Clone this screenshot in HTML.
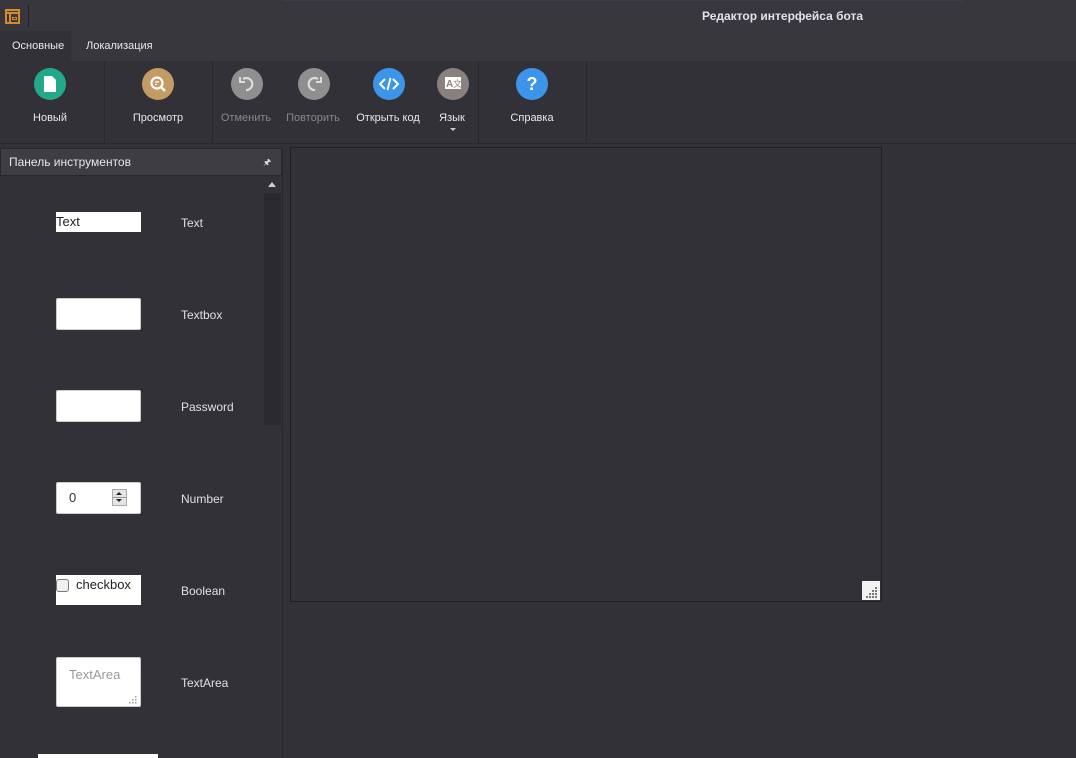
<!DOCTYPE html>
<html><head><meta charset="utf-8"><style>
*{margin:0;padding:0;box-sizing:border-box}
body{width:1076px;height:758px;overflow:hidden;background:#323137;font-family:"Liberation Sans",sans-serif;font-size:11px;color:#e8e8e8;position:relative}
.a{position:absolute}
.ic{position:absolute;width:32px;height:32px;border-radius:50%;display:flex;align-items:center;justify-content:center}
.lbl{position:absolute;top:111px;font-size:11px;white-space:nowrap;transform:translateX(-50%)}
.sep{position:absolute;top:61px;width:1px;height:82px;background:#28272c}
.w{position:absolute;left:56px;width:85px;background:#fff;border:1px solid #ccc;border-radius:2px}
.tl{position:absolute;left:181px;font-size:12px;color:#e0e0e0}
</style></head><body>
<div class="a" style="left:0;top:0;width:1076px;height:61px;background:#38373d"></div>
<div class="a" style="left:283px;top:0;width:680px;height:1px;background:#3e3e48"></div>
<div class="a" style="left:5px;top:9px;width:15px;height:15px;border:2px solid #d68a2a"></div>
<div class="a" style="left:7px;top:12px;width:11px;height:2px;background:#d68a2a"></div>
<div class="a" style="left:9px;top:14px;width:2px;height:8px;background:#d68a2a"></div>
<div class="a" style="left:12px;top:17px;width:5px;height:3px;border:1px solid #d68a2a"></div>
<div class="a" style="left:28px;top:5px;width:1px;height:22px;background:#222"></div>
<div class="a" style="left:702px;top:9px;font-size:12px;font-weight:bold;color:#dfe3ea">Редактор интерфейса бота</div>
<div class="a" style="left:0;top:31px;width:71px;height:30px;background:#323137"></div>
<div class="a" style="left:12px;top:40px">Основные</div>
<div class="a" style="left:86px;top:40px">Локализация</div>

<div class="ic" style="left:34px;top:68px;background:#23a98a"><svg width="14" height="16"><path d="M1 0h8l4 4v12H1z" fill="#fff"/></svg></div>
<div class="lbl" style="left:50px;top:112px">Новый</div>
<div class="sep" style="left:104px"></div>
<div class="ic" style="left:142px;top:68px;background:#c49a65"><svg width="18" height="18"><circle cx="8" cy="8" r="5.5" stroke="#fff" stroke-width="2.2" fill="none"/><path d="M12 12l4 4" stroke="#fff" stroke-width="2.4"/><path d="M6 7h4M6 9.5h2" stroke="#fff" stroke-width="1.3"/></svg></div>
<div class="lbl" style="left:158px;top:112px">Просмотр</div>
<div class="sep" style="left:212px"></div>
<div class="ic" style="left:231px;top:68px;background:#8f8f8f"><svg width="18" height="18"><path d="M5 4a6 6 0 1 1 3 11" stroke="#ddd" stroke-width="2.2" fill="none"/><path d="M2 2v5h5" stroke="#ddd" stroke-width="2" fill="none"/></svg></div>
<div class="lbl" style="left:246px;top:112px;color:#888">Отменить</div>
<div class="ic" style="left:298px;top:68px;background:#8f8f8f"><svg width="18" height="18"><path d="M13 4a6 6 0 1 0-3 11" stroke="#ddd" stroke-width="2.2" fill="none"/><path d="M16 2v5h-5" stroke="#ddd" stroke-width="2" fill="none"/></svg></div>
<div class="lbl" style="left:313px;top:112px;color:#888">Повторить</div>
<div class="ic" style="left:373px;top:68px;background:#3d95ea"><svg width="20" height="14"><path d="M6 2L1 7l5 5M14 2l5 5-5 5" stroke="#fff" stroke-width="2" fill="none"/><path d="M11.5 1l-3 12" stroke="#fff" stroke-width="1.8"/></svg></div>
<div class="lbl" style="left:388px;top:112px">Открыть код</div>
<div class="ic" style="left:437px;top:68px;background:#8a807d"><svg width="18" height="16"><rect x="1" y="1" width="16" height="12" fill="#fff"/><text x="2" y="11" font-size="10" font-weight="bold" fill="#8a807d" font-family="Liberation Sans">A</text><text x="9" y="11" font-size="9" fill="#8a807d" font-family="Liberation Sans">文</text></svg></div>
<div class="lbl" style="left:452px;top:112px">Язык</div>
<div class="a" style="left:450px;top:128px;border-left:3px solid transparent;border-right:3px solid transparent;border-top:3px solid #ccc"></div>
<div class="sep" style="left:478px"></div>
<div class="ic" style="left:516px;top:68px;background:#3d95ea;font-size:18px;font-weight:bold;color:#fff">?</div>
<div class="lbl" style="left:532px;top:112px">Справка</div>
<div class="sep" style="left:586px"></div>
<div class="a" style="left:0;top:143px;width:1076px;height:1px;background:#28272c"></div>

<div class="a" style="left:0;top:148px;width:282px;height:28px;background:#3e3d43;border:1px solid #28272c"></div>
<div class="a" style="left:9px;top:155px;font-size:12px;color:#e6e6e6">Панель инструментов</div>
<div class="a" style="left:263px;top:155px;font-size:9px;color:#ddd">🖈</div>
<div class="a" style="left:282px;top:148px;width:1px;height:610px;background:#28272c"></div>
<div class="a" style="left:268px;top:182px;border-left:4px solid transparent;border-right:4px solid transparent;border-bottom:5px solid #ccc"></div>
<div class="a" style="left:264px;top:193px;width:17px;height:232px;background:#2a292e"></div>

<div class="w" style="top:212px;height:20px;border:none;border-radius:0;color:#222;font-size:13px;padding:2px 0 0 0">Text</div>
<div class="tl" style="top:216px">Text</div>
<div class="w" style="top:298px;height:32px"></div>
<div class="tl" style="top:308px">Textbox</div>
<div class="w" style="top:390px;height:32px"></div>
<div class="tl" style="top:400px">Password</div>
<div class="w" style="top:482px;height:32px;color:#333;font-size:13px;padding:7px 0 0 12px">0</div>
<div class="a" style="left:112px;top:489px;width:15px;height:17px;background:#e4e4e4;border:1px solid #aaa"></div>
<div class="a" style="left:116px;top:492px;border-left:3px solid transparent;border-right:3px solid transparent;border-bottom:3px solid #222"></div>
<div class="a" style="left:116px;top:499px;border-left:3px solid transparent;border-right:3px solid transparent;border-top:3px solid #222"></div>
<div class="a" style="left:113px;top:497px;width:13px;height:1px;background:#999"></div>
<div class="tl" style="top:492px">Number</div>
<div class="w" style="top:575px;height:30px;border:none;border-radius:0;color:#222;font-size:13px;padding:2px 0 0 20px">checkbox</div>
<div class="a" style="left:56px;top:579px;width:13px;height:13px;border:1px solid #777;border-radius:3px;background:#f0f0f0"></div>
<div class="tl" style="top:584px">Boolean</div>
<div class="w" style="top:657px;height:50px;color:#999;font-size:13px;padding:9px 0 0 12px">TextArea</div>
<svg class="a" style="left:129px;top:696px" width="8" height="8"><g fill="#999"><rect x="6" y="0" width="1.5" height="1.5"/><rect x="3" y="3" width="1.5" height="1.5"/><rect x="6" y="3" width="1.5" height="1.5"/><rect x="0" y="6" width="1.5" height="1.5"/><rect x="3" y="6" width="1.5" height="1.5"/><rect x="6" y="6" width="1.5" height="1.5"/></g></svg>
<div class="tl" style="top:676px">TextArea</div>
<div class="a" style="left:38px;top:754px;width:120px;height:4px;background:#fff"></div>

<div class="a" style="left:290px;top:147px;width:592px;height:455px;border:1px solid #1f1e22"></div>
<div class="a" style="left:862px;top:581px;width:18px;height:19px;background:#f2f2f2"></div>
<svg class="a" style="left:866px;top:586px" width="12" height="12"><g fill="#777"><rect x="9" y="1" width="2" height="2"/><rect x="6" y="4" width="2" height="2"/><rect x="9" y="4" width="2" height="2"/><rect x="3" y="7" width="2" height="2"/><rect x="6" y="7" width="2" height="2"/><rect x="9" y="7" width="2" height="2"/><rect x="0" y="10" width="2" height="2"/><rect x="3" y="10" width="2" height="2"/><rect x="6" y="10" width="2" height="2"/><rect x="9" y="10" width="2" height="2"/></g></svg>
</body></html>
